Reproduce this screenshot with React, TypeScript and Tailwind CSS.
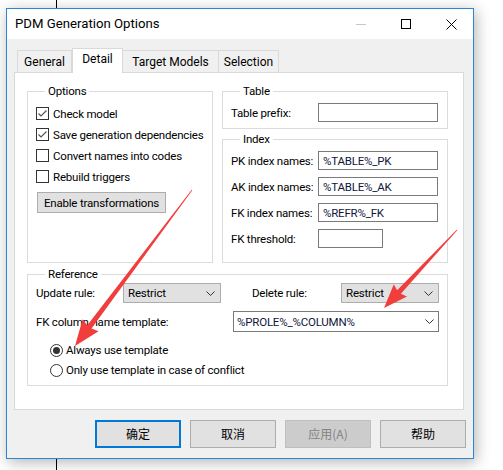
import React from "react";

const font = "font-['Roboto','Noto_Sans_CJK_SC',sans-serif]";

type Pt = [number, number];

function Arrow({ tail, tip, head, wing }: { tail: Pt; tip: Pt; head: number; wing: number }) {
  const dx = tip[0] - tail[0];
  const dy = tip[1] - tail[1];
  const len = Math.hypot(dx, dy);
  const ux = dx / len;
  const uy = dy / len;
  const nx = -uy;
  const ny = ux;
  const bx = tip[0] - ux * head;
  const by = tip[1] - uy * head;
  const p = (x: number, y: number, k: number) => `${(x + nx * k).toFixed(1)},${(y + ny * k).toFixed(1)}`;
  const pts = [
    p(tail[0], tail[1], 0.4),
    p(bx, by, 2.6),
    p(bx - ux * 2, by - uy * 2, wing),
    `${tip[0]},${tip[1]}`,
    p(bx - ux * 2, by - uy * 2, -wing),
    p(bx, by, -2.6),
    p(tail[0], tail[1], -0.4),
  ].join(" ");
  return <polygon points={pts} fill="#f23d3d" />;
}

function Check({ checked, label }: { checked?: boolean; label: string }) {
  return (
    <div className="flex h-[21px] items-center gap-[4px]">
      <span className="flex h-[13px] w-[13px] shrink-0 items-center justify-center border border-[#333] bg-white">
        {checked && (
          <svg width="11" height="11" viewBox="0 0 11 11">
            <polyline points="1.5,5.5 4,8 9.5,2.5" fill="none" stroke="#555" strokeWidth="1.2" />
          </svg>
        )}
      </span>
      <span>{label}</span>
    </div>
  );
}

function Radio({ on, label }: { on?: boolean; label: string }) {
  return (
    <div className="ml-[14px] flex h-[20px] items-center gap-[3px]">
      <span className="flex h-[13px] w-[13px] shrink-0 items-center justify-center rounded-full border border-[#333] bg-white">
        {on && <span className="h-[7px] w-[7px] rounded-full bg-[#333]" />}
      </span>
      <span>{label}</span>
    </div>
  );
}

function Chevron() {
  return (
    <svg width="9" height="5" viewBox="0 0 9 5">
      <polyline points="0.5,0.5 4.5,4.5 8.5,0.5" fill="none" stroke="#333" strokeWidth="1" />
    </svg>
  );
}

function Select({ value, className }: { value: string; className: string }) {
  return (
    <div className={`flex shrink-0 items-center justify-between border border-[#adadad] bg-[#e1e1e1] pl-[4px] pr-[5px] ${className}`}>
      <span>{value}</span>
      <Chevron />
    </div>
  );
}

function Field({ value, className }: { value?: string; className: string }) {
  return (
    <div className={`flex h-[19px] shrink-0 items-center border border-[#7a7a7a] bg-white pl-[4px] text-[#10163c] ${className}`}>
      {value}
    </div>
  );
}

function Group({ title, className, children }: { title: string; className: string; children: React.ReactNode }) {
  return (
    <fieldset className={`min-w-0 border border-[#dcdcdc] ${className}`}>
      <legend className="ml-[9px] px-[3px] leading-[16px]">{title}</legend>
      {children}
    </fieldset>
  );
}

function IndexRow({ label, value, w = "w-[120px]" }: { label: string; value?: string; w?: string }) {
  return (
    <div className="flex items-center">
      <span className="w-[87px] shrink-0">{label}</span>
      <Field value={value} className={w} />
    </div>
  );
}

function Btn({ label, kind }: { label: string; kind?: "default" | "disabled" }) {
  const style =
    kind === "default"
      ? "border-2 border-[#0078d7] bg-[#e1e1e1] text-black"
      : kind === "disabled"
        ? "border border-[#bfbfbf] bg-[#cccccc] text-[#838383]"
        : "border border-[#adadad] bg-[#e1e1e1] text-black";
  return <div className={`flex h-[28px] w-[86px] items-center justify-center ${style}`}>{label}</div>;
}

export default function App() {
  const tabs = [
    { name: "General", w: "w-[55px]" },
    { name: "Detail", w: "w-[51px]", active: true },
    { name: "Target Models", w: "w-[97px]" },
    { name: "Selection", w: "w-[61px]" },
  ];

  return (
    <div className={`relative h-[470px] w-[503px] overflow-hidden whitespace-nowrap bg-white pl-[6px] pt-[8px] text-[11.5px] leading-[16px] tracking-[-0.2px] text-black ${font}`}>
      <div className="absolute left-[56px] top-0 h-full w-px bg-black" />

      <div className="relative z-10 flex h-[451px] w-[468px] flex-col border border-[#2b87d6] bg-[#f0f0f0] shadow-[2px_3px_14px_rgba(0,0,0,0.3)]">
        {/* title bar */}
        <div className="flex h-[30px] items-center bg-white pl-[8px] pr-[16px]">
          <span className="flex-1 text-[13.2px] tracking-normal">PDM Generation Options</span>
          <div className="flex items-center gap-[35px]">
            <svg width="10" height="10" viewBox="0 0 10 10">
              <line x1="0" y1="5.5" x2="10" y2="5.5" stroke="#c6c6c6" strokeWidth="1" />
            </svg>
            <svg width="10" height="10" viewBox="0 0 10 10">
              <rect x="0.5" y="0.5" width="9" height="9" fill="none" stroke="#000" strokeWidth="1" />
            </svg>
            <svg width="11" height="11" viewBox="0 0 11 11">
              <path d="M0.5 0.5 L10.5 10.5 M10.5 0.5 L0.5 10.5" stroke="#000" strokeWidth="1" />
            </svg>
          </div>
        </div>

        {/* body */}
        <div className="flex flex-1 flex-col pl-[7px]">
          <div className="ml-[3px] mt-[9px] flex h-[24px] items-end text-[12px] tracking-normal">
            {tabs.map((t) =>
              t.active ? (
                <div
                  key={t.name}
                  className={`relative z-10 -mb-px flex h-[25px] items-start justify-center border border-b-0 border-[#d9d9d9] bg-white pt-[2px] ${t.w}`}
                >
                  {t.name}
                </div>
              ) : (
                <div
                  key={t.name}
                  className={`-ml-px flex h-[22px] items-center justify-center border border-b-0 border-[#d9d9d9] bg-[#f0f0f0] first:ml-0 ${t.w}`}
                >
                  {t.name}
                </div>
              ),
            )}
          </div>

          {/* tab panel */}
          <div className="h-[338px] w-[450px] border border-[#d9d9d9] bg-white pl-[12px] pt-[10px]">
            <div className="flex gap-[9px]">
              <Group title="Options" className="h-[180px] w-[186px] pl-[8px]">
                <div className="pt-[4px]">
                  <Check checked label="Check model" />
                  <Check checked label="Save generation dependencies" />
                  <Check label="Convert names into codes" />
                  <Check label="Rebuild triggers" />
                </div>
                <div className="ml-px mt-[5px] flex h-[21px] w-[129px] items-center justify-center border border-[#adadad] bg-[#e1e1e1]">
                  Enable transformations
                </div>
              </Group>

              <div className="flex flex-col gap-[2px]">
                <Group title="Table" className="h-[46px] w-[226px] pl-[8px]">
                  <div className="pt-[4px]">
                    <IndexRow label="Table prefix:" />
                  </div>
                </Group>
                <Group title="Index" className="h-[132px] w-[226px] pl-[8px]">
                  <div className="flex flex-col gap-[7px] pt-[4px]">
                    <IndexRow label="PK index names:" value="%TABLE%_PK" />
                    <IndexRow label="AK index names:" value="%TABLE%_AK" />
                    <IndexRow label="FK index names:" value="%REFR%_FK" />
                    <IndexRow label="FK threshold:" w="w-[65px]" />
                  </div>
                </Group>
              </div>
            </div>

            <Group title="Reference" className="mt-[3px] h-[120px] w-[421px] pl-[8px]">
              <div className="mt-px flex h-[20px] items-center">
                <span className="w-[87px] shrink-0">Update rule:</span>
                <Select value="Restrict" className="h-[20px] w-[98px]" />
                <span className="ml-[31px] w-[89px] shrink-0">Delete rule:</span>
                <Select value="Restrict" className="h-[20px] w-[98px]" />
              </div>
              <div className="mt-[8px] flex h-[21px] items-center">
                <span className="w-[197px] shrink-0">FK column name template:</span>
                <div className="flex h-[21px] w-[206px] shrink-0 items-center justify-between border border-[#7a7a7a] bg-white pl-[3px] pr-[4px] text-[#10163c]">
                  <span>%PROLE%_%COLUMN%</span>
                  <Chevron />
                </div>
              </div>
              <div className="mt-[8px]">
                <Radio on label="Always use template" />
                <Radio label="Only use template in case of conflict" />
              </div>
            </Group>
          </div>

          <div className="mt-[10px] flex justify-end gap-[9px] pr-[7px] text-[12px] tracking-normal [font-family:'Noto_Sans_CJK_SC',sans-serif]">
            <Btn label="确定" kind="default" />
            <Btn label="取消" />
            <Btn label="应用(A)" kind="disabled" />
            <Btn label="帮助" />
          </div>
        </div>
      </div>

      <svg className="pointer-events-none absolute left-0 top-0 z-20" width="503" height="470">
        <Arrow tail={[192, 190]} tip={[75, 346]} head={24} wing={10} />
        <Arrow tail={[457, 230]} tip={[384, 308]} head={22} wing={9} />
      </svg>
    </div>
  );
}
